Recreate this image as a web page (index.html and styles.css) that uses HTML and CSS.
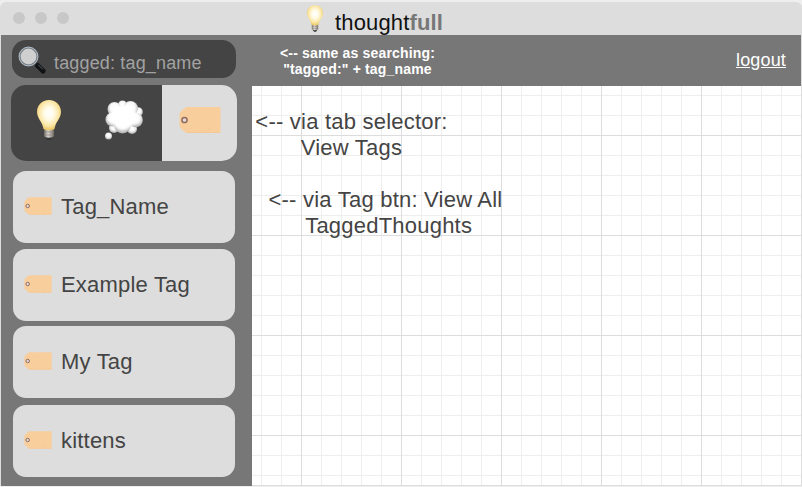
FILE: index.html
```html
<!DOCTYPE html>
<html lang="en">
<head>
<meta charset="utf-8">
<title>thoughtfull</title>
<link rel="stylesheet" href="styles.css">
</head>
<body>
<svg class="defs" width="0" height="0" aria-hidden="true">
  <defs>
    <radialGradient id="glow" cx=".5" cy=".44" r=".56">
      <stop offset="0" stop-color="#fff"/><stop offset=".35" stop-color="#fffbe8"/><stop offset=".75" stop-color="#fae5a2"/><stop offset="1" stop-color="#e9c461"/>
    </radialGradient>
    <linearGradient id="metal"><stop offset="0" stop-color="#77716a"/><stop offset=".4" stop-color="#dedbd5"/><stop offset="1" stop-color="#77716a"/></linearGradient>
    <radialGradient id="puff" cx=".5" cy=".4" r=".6"><stop offset="0" stop-color="#fff"/><stop offset=".5" stop-color="#f8f8f8"/><stop offset="1" stop-color="#aaa"/></radialGradient>
    <radialGradient id="core"><stop offset="0" stop-color="#fff"/><stop offset=".7" stop-color="#fff"/><stop offset="1" stop-color="#fff" stop-opacity="0"/></radialGradient>
    <symbol id="bulb" viewBox="0 0 24 40">
      <path d="M8.5 37h7l-2 3h-3z" fill="#343434"/>
      <path d="M7.2 29h9.6v7.500q-4.800 2.500-9.600 0z" fill="url(#metal)"/>
      <path d="M7.2 32h9.6M7.2 35h9.6" stroke="#8b857d" stroke-width=".7"/>
      <path d="M12 0C5 0 0 5.200 0 12c0 6.500 5.500 9.500 6.500 17 3 1.700 8 1.700 11 0C18.500 21.500 24 18.500 24 12 24 5.200 19 0 12 0z" fill="url(#glow)"/>
    </symbol>
    <symbol id="tag" viewBox="0 0 42 26">
      <path d="M8 0h32.500q1 0 1 1v24q0 1-1 1H8Q6 25.500 1.500 21 .5 20 .5 18V8Q.5 6 1.500 5 6 .5 8 0z" fill="#f8ce9d"/>
      <path d="M8 25.500h33M28 22h3M18 8h1M33 12h1" stroke="#f2c692" stroke-width=".8"/>
      <circle cx="5.500" cy="13" r="2.600" fill="#ddd" stroke="#96695a" stroke-width="1.500"/>
    </symbol>
  </defs>
</svg>
<div class="window">
  <header class="titlebar">
    <div class="lights"><i></i><i></i><i></i></div>
    <div class="brand"><svg class="brand-bulb"><use href="#bulb"/></svg><span>thought<b>full</b></span></div>
  </header>
  <div class="body">
    <aside class="sidebar">
      <div class="search">
        <svg class="lens" viewBox="0 0 28 28">
          <path d="M17.500 18l7 7" stroke="#66717b" stroke-width="3"/>
          <path d="M19.500 19.500l5.500 5.500" stroke="#101214" stroke-width="5" stroke-linecap="round"/>
          <path d="M20.500 19l4 4" stroke="#59636b" stroke-width="1" stroke-linecap="round"/>
          <circle cx="10.500" cy="10.500" r="9" fill="#cfcfcf" stroke="#71767b" stroke-width="2.200"/>
          <circle cx="10.500" cy="10.500" r="9.300" fill="none" stroke="#b4c6d4" stroke-width=".9"/>
        </svg>
        <span>tagged: tag_name</span>
      </div>
      <nav class="tabs">
        <div class="tab"><svg class="tab-bulb"><use href="#bulb"/></svg></div>
        <div class="tab"><svg class="tab-cloud" viewBox="0 0 38 40">
          <g fill="url(#puff)">
            <circle cx="17.500" cy="5" r="4.500"/><circle cx="33" cy="12" r="4.800"/><circle cx="9" cy="28" r="5"/><circle cx="27" cy="29" r="5"/>
            <circle cx="9.500" cy="9" r="7"/><circle cx="25.500" cy="8.500" r="7.500"/><circle cx="7.500" cy="19.500" r="7"/><circle cx="30.500" cy="20" r="7.300"/><circle cx="17.500" cy="25" r="8.500"/>
            <circle cx="3.500" cy="36" r="3.500"/>
          </g>
          <ellipse cx="18.500" cy="16.500" rx="16" ry="14" fill="url(#core)"/>
        </svg></div>
        <div class="tab active"><svg class="tab-tag"><use href="#tag"/></svg></div>
      </nav>
      <div class="tags">
        <div class="item"><svg><use href="#tag"/></svg><span>Tag_Name</span></div>
        <div class="item"><svg><use href="#tag"/></svg><span>Example Tag</span></div>
        <div class="item"><svg><use href="#tag"/></svg><span>My Tag</span></div>
        <div class="item"><svg><use href="#tag"/></svg><span>kittens</span></div>
      </div>
    </aside>
    <main class="main">
      <div class="toolbar">
        <p class="hint">&lt;-- same as searching:<br>"tagged:" + tag_name</p>
        <a class="logout">logout</a>
      </div>
      <div class="canvas">
        <p class="note tabs-note">&lt;-- via tab selector:<br>View Tags</p>
        <p class="note btn-note">&lt;-- via Tag btn: View All<br>&nbsp;TaggedThoughts</p>
      </div>
    </main>
  </div>
</div>
</body>
</html>
```
FILE: styles.css
```css
* { box-sizing: border-box; }
body { margin: 0; background: #eee; font-family: "Liberation Sans", Arial, sans-serif; color: #444; overflow: hidden; }
p { margin: 0; }
svg { display: block; flex: none; }
.defs { position: absolute; }
.window { width: 802px; height: 484px; margin-top: 2px; background: #ddd; border-radius: 6px 6px 0 0; }
.titlebar { height: 33px; display: flex; align-items: flex-start; }
.lights { display: flex; gap: 10px; padding: 10px 0 0 13px; width: 307px; }
.lights i { width: 12px; height: 12px; border-radius: 50%; background: #c8c8c8; }
.brand { display: flex; color: #111; font-size: 22px; line-height: 26px; letter-spacing: .15px; white-space: nowrap; }
.brand-bulb { width: 16px; height: 27px; margin: 3px 12px 0 0; }
.brand span { padding-top: 8px; }
.brand b { color: #777; }
.body { display: flex; height: 451px; padding: 0 1px 0 1px; }
.sidebar { width: 251px; background: #777; padding: 5px 0 0 10px; }
.search { display: flex; width: 224px; height: 38px; margin-left: 1px; background: #444; border-radius: 14px; color: #a2a2a2; font-size: 18px; line-height: 20px; letter-spacing: .16px; white-space: nowrap; }
.lens { width: 28px; height: 28px; margin: 6px 8px 0 6px; }
.search span { padding-top: 13px; }
.tabs { display: flex; width: 226px; height: 76px; margin-top: 7px; border-radius: 15px; overflow: hidden; background: #444; }
.tab { width: 75px; display: flex; justify-content: center; }
.tab:first-child { width: 76px; }
.tab.active { background: #ddd; }
.tab-bulb { width: 24px; height: 40px; margin-top: 15px; }
.tab-cloud { width: 38px; height: 40px; margin: 15px 1px 0 0; }
.tab-tag { width: 42px; height: 26px; margin: 22px 0 0 0; }
.tags { display: grid; grid-template-rows: 72px 72px 72px 72px; width: 222px; margin: 10px 0 0 2px; row-gap: 6px; }
.item { display: flex; align-items: center; background: #ddd; border-radius: 13px; padding-left: 10px; font-size: 22px; letter-spacing: .2px; white-space: nowrap; }
.item:nth-child(3) { margin: -1px 0 1px; }
.item svg { width: 28px; height: 18px; margin: 0 9.5px 2px .5px; }
.main { flex: 1; }
.toolbar { height: 51px; background: #777; color: #fff; display: flex; justify-content: space-between; }
.hint { width: 211px; padding-top: 10px; text-align: center; font-size: 14px; line-height: 16px; font-weight: bold; letter-spacing: .17px; white-space: nowrap; }
.logout { padding: 14px 15px 0 0; font-size: 18px; line-height: 22px; letter-spacing: .15px; text-decoration: underline; }
.canvas {
  height: 400px; padding-top: 23px; border-bottom: 1px solid #ddd; background-color: #fff;
  background-image: linear-gradient(#ddd 1px, transparent 1px), linear-gradient(90deg, #ddd 1px, transparent 1px), linear-gradient(#eee 1px, transparent 1px), linear-gradient(90deg, #eee 1px, transparent 1px);
  background-size: 100px 100px, 100px 100px, 20px 20px, 20px 20px;
  background-position: 49px 49px, 49px 49px, 9px 9px, 9px 9px;
}
.note { font-size: 22px; line-height: 26px; letter-spacing: .22px; text-align: center; white-space: nowrap; }
.tabs-note { width: 199px; }
.btn-note { width: 267px; margin-top: 26px; }
```
